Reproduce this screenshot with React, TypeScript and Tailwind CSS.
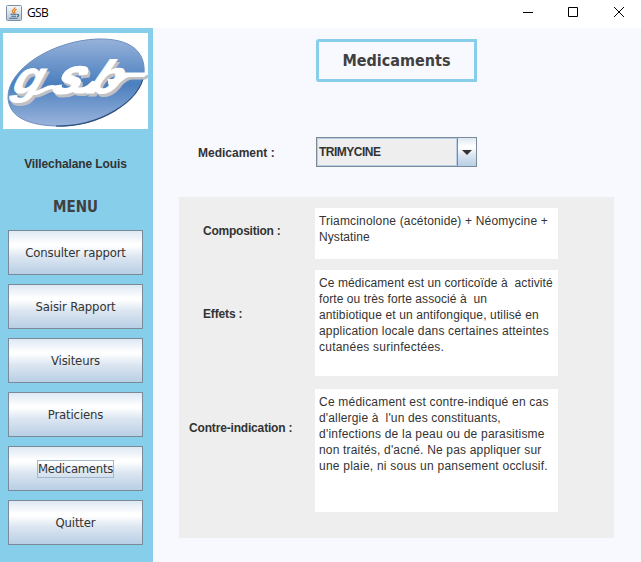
import React from "react";

const ui = "font-['DejaVu_Sans_Condensed','DejaVu_Sans',sans-serif]";

function JavaIcon() {
  return (
    <svg width="16" height="16" viewBox="0 0 16 16" className="ml-[6px]">
      <defs>
        <linearGradient id="jbg" x1="0" y1="0" x2="0" y2="1">
          <stop offset="0" stopColor="#f7f9fb" />
          <stop offset="1" stopColor="#b9c6d3" />
        </linearGradient>
      </defs>
      <rect x="0.5" y="0.5" width="15" height="15" rx="1" fill="url(#jbg)" stroke="#7d90a3" />
      <path d="M8.8 2.2C9.6 4 5.6 5 6.4 6.6L8 8.6M10.6 4.4C8.6 5.2 7.8 6 9 8.4" fill="none" stroke="#e8832a" strokeWidth="1.3" />
      <path d="M4.5 9.3H10.6M5.2 11.2H10M3.2 13.2H11.5M11 9.6C13.6 9.2 13 11.4 11 11.8" fill="none" stroke="#41698f" strokeWidth="1.1" />
    </svg>
  );
}

function LogoLetters({ fill }: { fill: string }) {
  return (
    <g fill={fill} stroke={fill} fontFamily="'Liberation Sans', sans-serif" fontStyle="italic" fontWeight="bold">
      <text transform="translate(8 60) scale(1.12 1.08) skewX(-18)" fontSize="42" strokeWidth="0.8">g</text>
      <text transform="translate(47 60) scale(1.02 1) skewX(-28)" fontSize="49" strokeWidth="2">s</text>
      <text transform="translate(83 60) scale(1.08 1) skewX(-24)" fontSize="46" strokeWidth="1.2">b</text>
      <path d="M31 60C38 60 42 54 50 54" fill="none" strokeWidth="4" strokeLinecap="round" />
      <path d="M72 57C81 59 85 56 90 51" fill="none" strokeWidth="6" strokeLinecap="round" />
      <path d="M105 46C113 49 116 40 124 40H145L141 43.5H127C120 44 117 53 106 52Z" strokeWidth="1" />
    </g>
  );
}

function Logo() {
  return (
    <svg width="145" height="96" viewBox="0 0 145 96" className="bg-white">
      <defs>
        <linearGradient id="oval" x1="0" y1="0" x2="0" y2="1">
          <stop offset="0" stopColor="#96b2da" />
          <stop offset="0.52" stopColor="#4b7fbe" />
          <stop offset="1" stopColor="#9ab4dc" />
        </linearGradient>
      </defs>
      <path d="M5 65C4 37 48 8 94 6C128 5 143 19 141 41C137 69 96 94 53 93C20 92 6 81 5 65Z" fill="url(#oval)" stroke="#6d8fbd" strokeWidth="1" />
      <path d="M53 93C96 94 137 69 141 41" fill="none" stroke="#2e5181" strokeWidth="1.2" />
      <g transform="translate(2 2.5)"><LogoLetters fill="#bfc1c5" /></g>
      <LogoLetters fill="#ffffff" />
    </svg>
  );
}

const menu = [
  { label: "Consulter rapport", focused: false },
  { label: "Saisir Rapport", focused: false },
  { label: "Visiteurs", focused: false },
  { label: "Praticiens", focused: false },
  { label: "Medicaments", focused: true },
  { label: "Quitter", focused: false },
];

const metal = "bg-[linear-gradient(to_bottom,#dde8f3_0%,#ffffff_30%,#ffffff_34%,#dce6f1_60%,#b8cfe5_100%)]";

function Sidebar() {
  return (
    <aside className="flex w-[153px] shrink-0 flex-col bg-[#87ceeb] pt-[5px]">
      <div className="ml-[3px] h-[96px]"><Logo /></div>
      <div className="mt-[27px] h-4 w-[151px] text-center text-[12px] leading-4 font-bold tracking-[-0.1px] whitespace-nowrap">Villechalane Louis</div>
      <div className={`${ui} mt-[25px] h-5 w-[151px] text-center text-[15px] leading-5 font-bold text-[#404040]`}>MENU</div>
      <nav className="mt-[13px] ml-2 flex flex-col gap-[9px]">
        {menu.map((m) => (
          <button key={m.label} className={`${ui} ${metal} flex h-[45px] w-[135px] items-center justify-center border border-[#7a8a99] text-[13px]`}>
            <span className={`h-[18px] border leading-4 whitespace-nowrap ${m.focused ? "border-[#a3b8cc] tracking-[-0.3px]" : "border-transparent tracking-[-0.15px]"}`}>{m.label}</span>
          </button>
        ))}
      </nav>
    </aside>
  );
}

const fields = [
  {
    label: "Composition :",
    row: "mt-[11px] h-[51px]",
    labelBox: "pl-6 pt-[15px] tracking-[-0.24px]",
    lines: [
      { text: "Triamcinolone (acétonide) + Néomycine +", spacing: "tracking-[0.17px]" },
      { text: "Nystatine", spacing: "tracking-[0.07px]" },
    ],
  },
  {
    label: "Effets :",
    row: "mt-[11px] h-[106px]",
    labelBox: "pl-6 pt-9 tracking-[-0.15px]",
    lines: [
      { text: "Ce médicament est un corticoïde à  activité", spacing: "tracking-[0.1px]" },
      { text: "forte ou très forte associé à  un", spacing: "tracking-[0.08px]" },
      { text: "antibiotique et un antifongique, utilisé en", spacing: "tracking-[0.13px]" },
      { text: "application locale dans certaines atteintes", spacing: "tracking-[0.18px]" },
      { text: "cutanées surinfectées.", spacing: "tracking-[0.23px]" },
    ],
  },
  {
    label: "Contre-indication :",
    row: "mt-[13px] h-[123px]",
    labelBox: "pl-[10px] pt-[31px] tracking-[-0.17px]",
    lines: [
      { text: "Ce médicament est contre-indiqué en cas", spacing: "tracking-[0.21px]" },
      { text: "d'allergie à  l'un des constituants,", spacing: "tracking-[0.16px]" },
      { text: "d'infections de la peau ou de parasitisme", spacing: "tracking-[0.21px]" },
      { text: "non traités, d'acné. Ne pas appliquer sur", spacing: "tracking-[0.18px]" },
      { text: "une plaie, ni sous un pansement occlusif.", spacing: "tracking-[0.23px]" },
    ],
  },
];

export default function App() {
  return (
    <div className="flex h-[562px] w-[641px] flex-col overflow-hidden bg-[#f8f8ff] font-['Liberation_Sans',Arial,sans-serif] text-[#333333]">
      <header className="flex h-7 shrink-0 items-center bg-white pb-[3px] text-black">
        <JavaIcon />
        <span className="ml-[5px] font-['Open_Sans',sans-serif] text-[12px] leading-4 tracking-[-0.6px]">GSB</span>
        <svg className="mr-[13px] mb-px ml-auto" width="110" height="14" viewBox="0 0 110 14" fill="none" stroke="black">
          <path d="M5 7.5H15" />
          <path d="M50.5 2.5H59.5V11.5H50.5Z" />
          <path d="M96 2L106 12M106 2L96 12" />
        </svg>
      </header>
      <div className="flex grow">
        <Sidebar />
        <main className="flex flex-col">
          <h1 className={`${ui} mt-[11px] ml-[163px] h-[43px] w-[161px] rounded-l-[3px] border-[3px] border-[#87ceeb] text-center text-[16px] leading-[37px] font-bold text-[#404040]`}>Medicaments</h1>
          <div className="mt-[55px] ml-[45px] flex h-[30px]">
            <label className="w-[118px] pt-2 text-[12px] leading-4 font-bold">Medicament :</label>
            <div className="flex w-[161px] border border-[#7a8a99]">
              <div className="w-[140px] border border-[#b8cfe5] bg-[#eeeeee] pt-[5px] pl-px text-[12px] leading-4 font-bold tracking-[-0.5px]">TRIMYCINE</div>
              <div className={`${metal} flex grow items-center justify-center border-l border-[#7a8a99]`}>
                <svg width="10" height="5" viewBox="0 0 10 5"><path d="M0 0H10L5 5Z" fill="#333333" /></svg>
              </div>
            </div>
          </div>
          <section className="mt-[30px] ml-[26px] flex h-[341px] w-[435px] flex-col bg-[#eeeeee]">
            {fields.map((f) => (
              <div key={f.label} className={`flex ${f.row}`}>
                <label className={`w-[136px] shrink-0 text-[12px] leading-4 font-bold whitespace-nowrap ${f.labelBox}`}>{f.label}</label>
                <div className="w-[243px] bg-white pt-[5px] pl-1 text-[12px] leading-4 whitespace-pre">
                  {f.lines.map((l) => <div key={l.text} className={l.spacing}>{l.text}</div>)}
                </div>
              </div>
            ))}
          </section>
        </main>
      </div>
    </div>
  );
}
